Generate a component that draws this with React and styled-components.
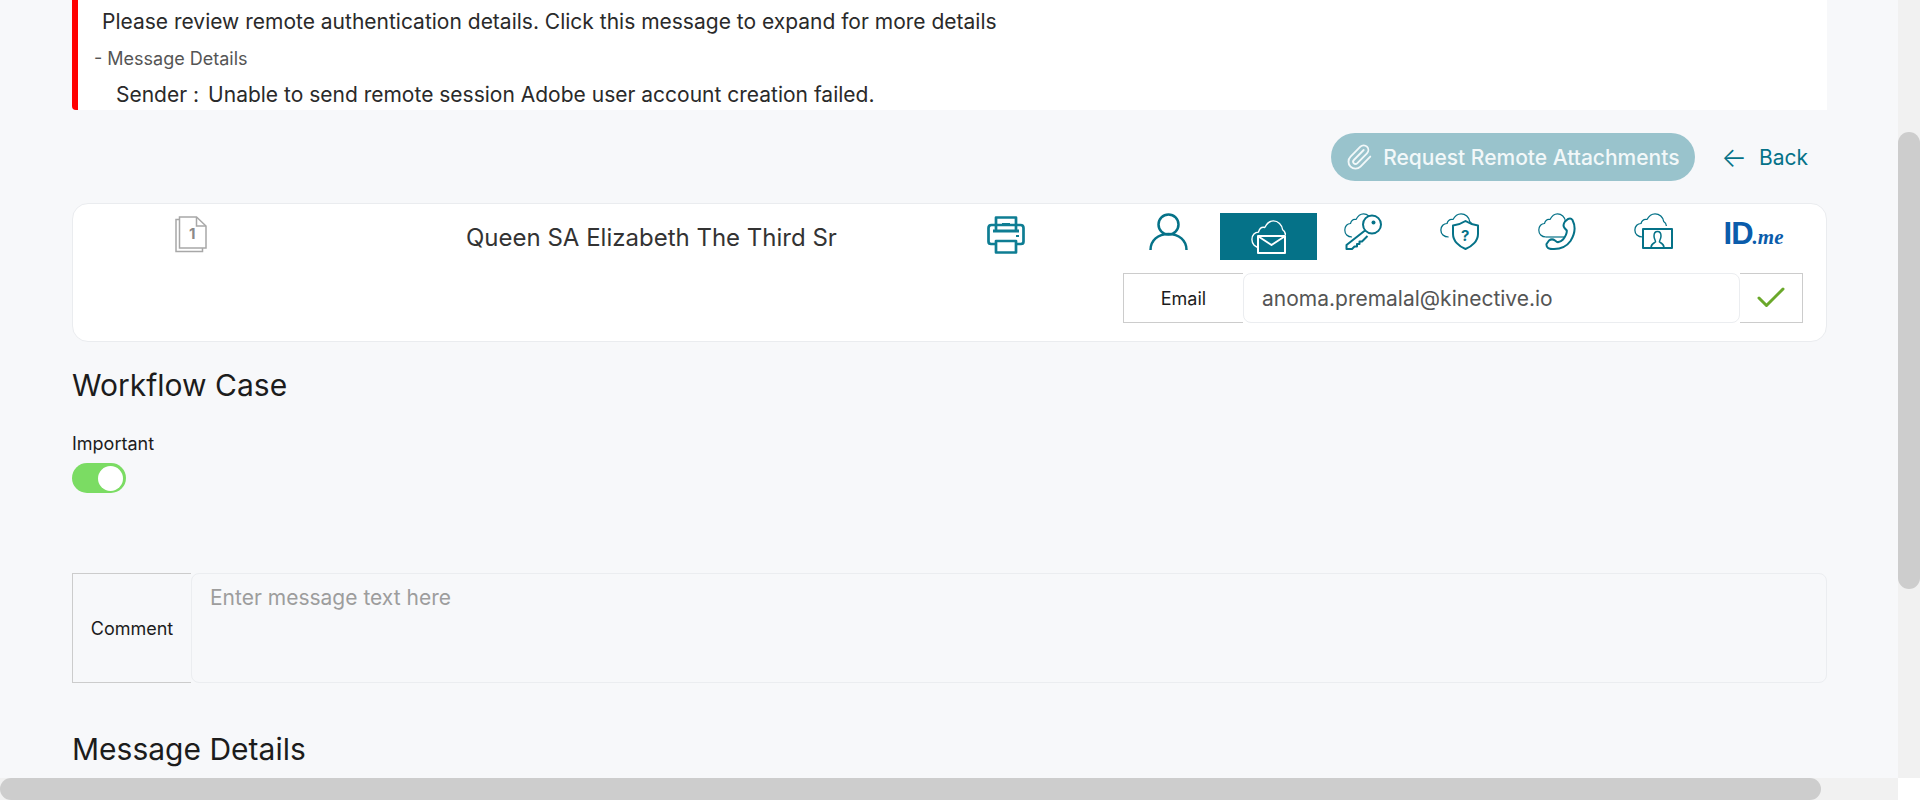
import React from "react";
import styled, { createGlobalStyle } from "styled-components";
import { Check, Paperclip } from "lucide-react";

const teal = "#057288";

const Global = createGlobalStyle`
  html, body { margin: 0; padding: 0; height: 100%; overflow: hidden; background: #fff; }
  body { font-family: Inter, "Noto Sans", sans-serif; color: #1c1c1c; }
  * { box-sizing: border-box; }
`;

const Shell = styled.div`
  display: grid;
  grid-template-columns: 1898px 22px;
  grid-template-rows: 778px 22px;
  width: 1920px;
  height: 800px;
`;

const Main = styled.main`
  background: #f7f8fa;
  overflow: hidden;
  padding: 0 71px 0 72px;
`;

const VTrack = styled.div`
  background: #f1f1f1;
  padding-top: 132px;
`;

const VThumb = styled.div`
  height: 457px;
  background: #cdcdcd;
  border-radius: 11px;
`;

const HTrack = styled.div`
  background: #f1f1f1;
`;

const HThumb = styled.div`
  width: 1821px;
  height: 22px;
  background: #cdcdcd;
  border-radius: 11px;
`;

const Corner = styled.div`
  background: #fff;
`;

const Alert = styled.section`
  height: 110px;
  background: #fff;
  border-left: 6px solid #ff0000;
  border-radius: 0 0 0 4px;
  overflow: hidden;
`;

const AlertTitle = styled.div`
  font-size: 21px;
  line-height: 24px;
  padding: 10px 0 0 24px;
  color: #2a2a2a;
`;

const AlertDetailsHead = styled.div`
  font-size: 18px;
  line-height: 22px;
  padding: 14px 0 0 16px;
  color: #555;
`;

const AlertSender = styled.div`
  display: flex;
  font-size: 21px;
  line-height: 24px;
  padding: 13px 0 0 38px;
  color: #2a2a2a;
`;

const SenderLabel = styled.span`
  margin-right: 9px;
`;

const ActionBar = styled.div`
  display: flex;
  justify-content: flex-end;
  align-items: center;
  margin-top: 23px;
  height: 48px;
  padding-right: 19px;
`;

const AttachButton = styled.button`
  display: flex;
  align-items: center;
  gap: 10px;
  width: 364px;
  height: 48px;
  padding: 0 0 0 14px;
  border: 0;
  border-radius: 24px;
  background: #99c3cc;
  color: #f2f8f9;
  font: 500 21px Inter, sans-serif;
  white-space: nowrap;
`;

const BackLink = styled.a`
  display: flex;
  align-items: center;
  margin-left: 26px;
  color: ${teal};
  font-size: 21px;
`;

const BackArrow = styled.span`
  margin-right: 12px;
  font-size: 27px;
  font-weight: 300;
  line-height: 1;
`;

const Card = styled.section`
  margin-top: 22px;
  height: 139px;
  background: #fff;
  border: 1px solid #eaecef;
  border-radius: 16px;
  padding: 9px 23px 0 0;
`;

const TopRow = styled.div`
  display: grid;
  grid-template-columns: 235px 679px 136px 679px;
  height: 47px;
`;

const DocCell = styled.div`
  display: flex;
  justify-content: center;
  padding-top: 3px;
`;

const Name = styled.div`
  padding: 10px 0 0 158px;
  font-size: 24px;
  line-height: 30px;
  color: #333;
`;

const PrintCell = styled.div`
  padding-top: 3px;
`;

const Tabs = styled.div`
  display: grid;
  grid-template-columns: repeat(7, 97px);
`;

const Tab = styled.div`
  display: flex;
  justify-content: center;
  align-items: ${(p) => (p.$active ? "center" : "flex-start")};
  padding-right: ${(p) => (p.$active ? 0 : "6px")};
  background: ${(p) => (p.$active ? teal : "transparent")};
  color: ${(p) => (p.$active ? "#fff" : teal)};
`;

const LogoTab = styled(Tab)`
  align-items: center;
  padding: 0;
`;

const Logo = styled.div`
  display: flex;
  align-items: baseline;
  color: #0a5cab;
  line-height: 1;
  margin-bottom: 5px;
`;

const LogoId = styled.span`
  font: 700 31px "Liberation Sans", sans-serif;
  letter-spacing: -1px;
`;

const LogoMe = styled.span`
  font: italic 700 21px "Liberation Serif", serif;
`;

const EmailRow = styled.div`
  display: flex;
  justify-content: flex-end;
  margin-top: 13px;
  height: 50px;
`;

const EmailLabel = styled.div`
  width: 120px;
  display: flex;
  align-items: center;
  justify-content: center;
  border: 1px solid #cccccc;
  border-right: 0;
  font-size: 18px;
`;

const EmailValue = styled.div`
  width: 497px;
  display: flex;
  align-items: center;
  padding-left: 18px;
  border: 1px solid #ebedf0;
  border-radius: 8px;
  font-size: 21px;
  color: #555;
`;

const ConfirmBox = styled.div`
  width: 63px;
  display: flex;
  align-items: center;
  justify-content: center;
  border: 1px solid #cccccc;
  border-left: 0;
  color: #6aa82a;
`;

const SectionTitle = styled.h2`
  margin: ${(p) => p.$top}px 0 0;
  font-size: 30px;
  line-height: 34px;
  font-weight: 400;
  color: #1c1c1c;
`;

const FieldLabel = styled.div`
  margin-top: 31px;
  font-size: 18px;
  line-height: 22px;
`;

const Toggle = styled.div`
  display: flex;
  justify-content: flex-end;
  align-items: center;
  width: 54px;
  height: 30px;
  margin-top: 8px;
  padding-right: 3px;
  border-radius: 15px;
  background: #7bdc63;
`;

const Knob = styled.div`
  width: 25px;
  height: 25px;
  border-radius: 50%;
  background: #fff;
`;

const CommentRow = styled.div`
  display: flex;
  height: 110px;
  margin-top: 80px;
`;

const CommentLabel = styled.div`
  width: 119px;
  display: flex;
  align-items: center;
  justify-content: center;
  border: 1px solid #cccccc;
  border-right: 0;
  font-size: 18px;
`;

const CommentBox = styled.div`
  flex: 1;
  padding: 10px 0 0 18px;
  border: 1px solid #ebedf0;
  border-radius: 8px;
  font-size: 21px;
  line-height: 28px;
  color: #9d9d9d;
`;

const cloud = "M8 24C3.500 24 0.800 21 0.800 17C0.800 13 3.500 10.500 6.500 10.500C7.500 7 10 6 12 6.500C14 2.500 16.500 0.800 19.500 0.800C23.500 0.800 27 4 27.500 8.500C29 9.500 30 11 30 13";

const Icon = ({ w = 38, h = 37, children }) => (
  <svg width={w} height={h} viewBox={`0 0 ${w} ${h}`} fill="none" stroke="currentColor" strokeLinejoin="round">
    {children}
  </svg>
);

const DocIcon = () => (
  <svg width="32" height="38" viewBox="0 0 32 38" fill="none" stroke="#a8a8a8" strokeWidth="1.500">
    <path d="M4.500 3.500H1V35.500H27.500V32" />
    <path d="M4.500 1H21.500L31 10V32H4.500Z" fill="#fff" />
    <path d="M21.500 1V10H31" />
    <text x="14" y="23" fontFamily="Inter, sans-serif" fontWeight="700" fontSize="15" fill="#8a8a8a" stroke="none">1</text>
  </svg>
);

const PrinterIcon = () => (
  <svg width="38" height="38" viewBox="0 0 38 38" fill="none" stroke="#0e7d93" strokeWidth="2.700" strokeLinejoin="round">
    <path d="M9 14V1.500H29V14" />
    <path d="M8 28H4C2.500 28 1.500 27 1.500 25.500V12C1.500 10 2.500 9 4.500 9H33.500C35.500 9 36.500 10 36.500 12V25.500C36.500 27 35.500 28 34 28H30" />
    <path d="M6 15H32" strokeWidth="3" />
    <path d="M9 25H29V36.500H9Z" />
    <path d="M15 8H23" strokeWidth="2" />
    <path d="M29 20H32" strokeWidth="2" />
  </svg>
);

const UserIcon = () => (
  <Icon w={39} h={37}>
    <circle cx="19.500" cy="11.500" r="10" strokeWidth="2.500" />
    <path d="M1.500 37C1.500 27.500 9 21 19.500 21S37.500 27.500 37.500 37" strokeWidth="2.500" />
  </Icon>
);

const MailIcon = () => (
  <Icon w={35} h={34}>
    <path d={cloud} strokeWidth="1.200" transform="scale(1.150)" />
    <path d="M7 16H34V33H7Z" fill="#057288" strokeWidth="2" />
    <path d="M7.500 16.500L20.500 25L33.500 16.500" strokeWidth="2" />
  </Icon>
);

const KeyIcon = () => (
  <Icon>
    <path d={cloud} strokeWidth="1.200" />
    <path
      d="M21 17.500L2.500 32V36H8L10.500 33.500H13V31H15.500V28.500H18L23.500 23"
      fill="#fff"
      strokeWidth="2"
    />
    <circle cx="28" cy="11.500" r="9" fill="#fff" strokeWidth="2" />
    <circle cx="29.500" cy="9.500" r="2" fill="currentColor" stroke="none" />
  </Icon>
);

const ShieldIcon = () => (
  <Icon w={39}>
    <path d={cloud} strokeWidth="1.200" transform="scale(1.080 1)" />
    <path d="M13 12.500C17 12 21 11 25.500 8C30 11 34 12 38 12.500V21C38 28 32 33.500 25.500 36C19 33.500 13 28 13 21Z" fill="#fff" strokeWidth="2" />
    <text x="21" y="28" fontFamily="Inter, sans-serif" fontWeight="700" fontSize="15" fill="currentColor" stroke="none">?</text>
  </Icon>
);

const PhoneIcon = () => (
  <Icon>
    <path d={cloud} strokeWidth="1.200" />
    <path d="M8 24H26" strokeWidth="1.200" />
    <path
      d="M27 8.500L30 6C32 5 33.500 5.500 34.500 7C37.500 13 37 21 32.500 28C29 33 24 36 16 36C11 36.500 8 35 8.500 31L11 27.500C13 26 15 26 17 27.500L19 29C21 29.500 23 28.500 25 26.500C27.500 23.500 29 20 28.800 17.500L26.500 15C25 13 25.500 10.500 27 8.500Z"
      fill="#fff"
      strokeWidth="2"
    />
  </Icon>
);

const VideoIcon = () => (
  <Icon w={39} h={36}>
    <path d={cloud} strokeWidth="1.200" transform="scale(1.080 1)" />
    <path d="M9 16H38V35H9Z" fill="#fff" strokeWidth="2" />
    <path d="M17 34.500C17 31 20 30 21.500 29C22 27.500 20 26.500 20 23C20 20 21 18.500 23.500 18.500S27 20 27 23C27 26.500 25 27.500 25.500 29C27 30 30 31 30 34.500" strokeWidth="1.500" />
  </Icon>
);

export default function App() {
  return (
    <Shell>
      <Global />
      <Main>
        <Alert>
          <AlertTitle>Please review remote authentication details. Click this message to expand for more details</AlertTitle>
          <AlertDetailsHead>- Message Details</AlertDetailsHead>
          <AlertSender>
            <SenderLabel>Sender :</SenderLabel>
            <span>Unable to send remote session Adobe user account creation failed.</span>
          </AlertSender>
        </Alert>

        <ActionBar>
          <AttachButton>
            <Paperclip size={28} strokeWidth={1.600} />
            Request Remote Attachments
          </AttachButton>
          <BackLink>
            <BackArrow>←</BackArrow>
            Back
          </BackLink>
        </ActionBar>

        <Card>
          <TopRow>
            <DocCell><DocIcon /></DocCell>
            <Name>Queen SA Elizabeth The Third Sr</Name>
            <PrintCell><PrinterIcon /></PrintCell>
            <Tabs>
              <Tab><UserIcon /></Tab>
              <Tab $active><MailIcon /></Tab>
              <Tab><KeyIcon /></Tab>
              <Tab><ShieldIcon /></Tab>
              <Tab><PhoneIcon /></Tab>
              <Tab><VideoIcon /></Tab>
              <LogoTab>
                <Logo>
                  <LogoId>ID</LogoId>
                  <LogoMe>.me</LogoMe>
                </Logo>
              </LogoTab>
            </Tabs>
          </TopRow>
          <EmailRow>
            <EmailLabel>Email</EmailLabel>
            <EmailValue>anoma.premalal@kinective.io</EmailValue>
            <ConfirmBox><Check size={36} strokeWidth={2} /></ConfirmBox>
          </EmailRow>
        </Card>

        <SectionTitle $top={26}>Workflow Case</SectionTitle>
        <FieldLabel>Important</FieldLabel>
        <Toggle><Knob /></Toggle>

        <CommentRow>
          <CommentLabel>Comment</CommentLabel>
          <CommentBox>Enter message text here</CommentBox>
        </CommentRow>

        <SectionTitle $top={49}>Message Details</SectionTitle>
      </Main>
      <VTrack><VThumb /></VTrack>
      <HTrack><HThumb /></HTrack>
      <Corner />
    </Shell>
  );
}
